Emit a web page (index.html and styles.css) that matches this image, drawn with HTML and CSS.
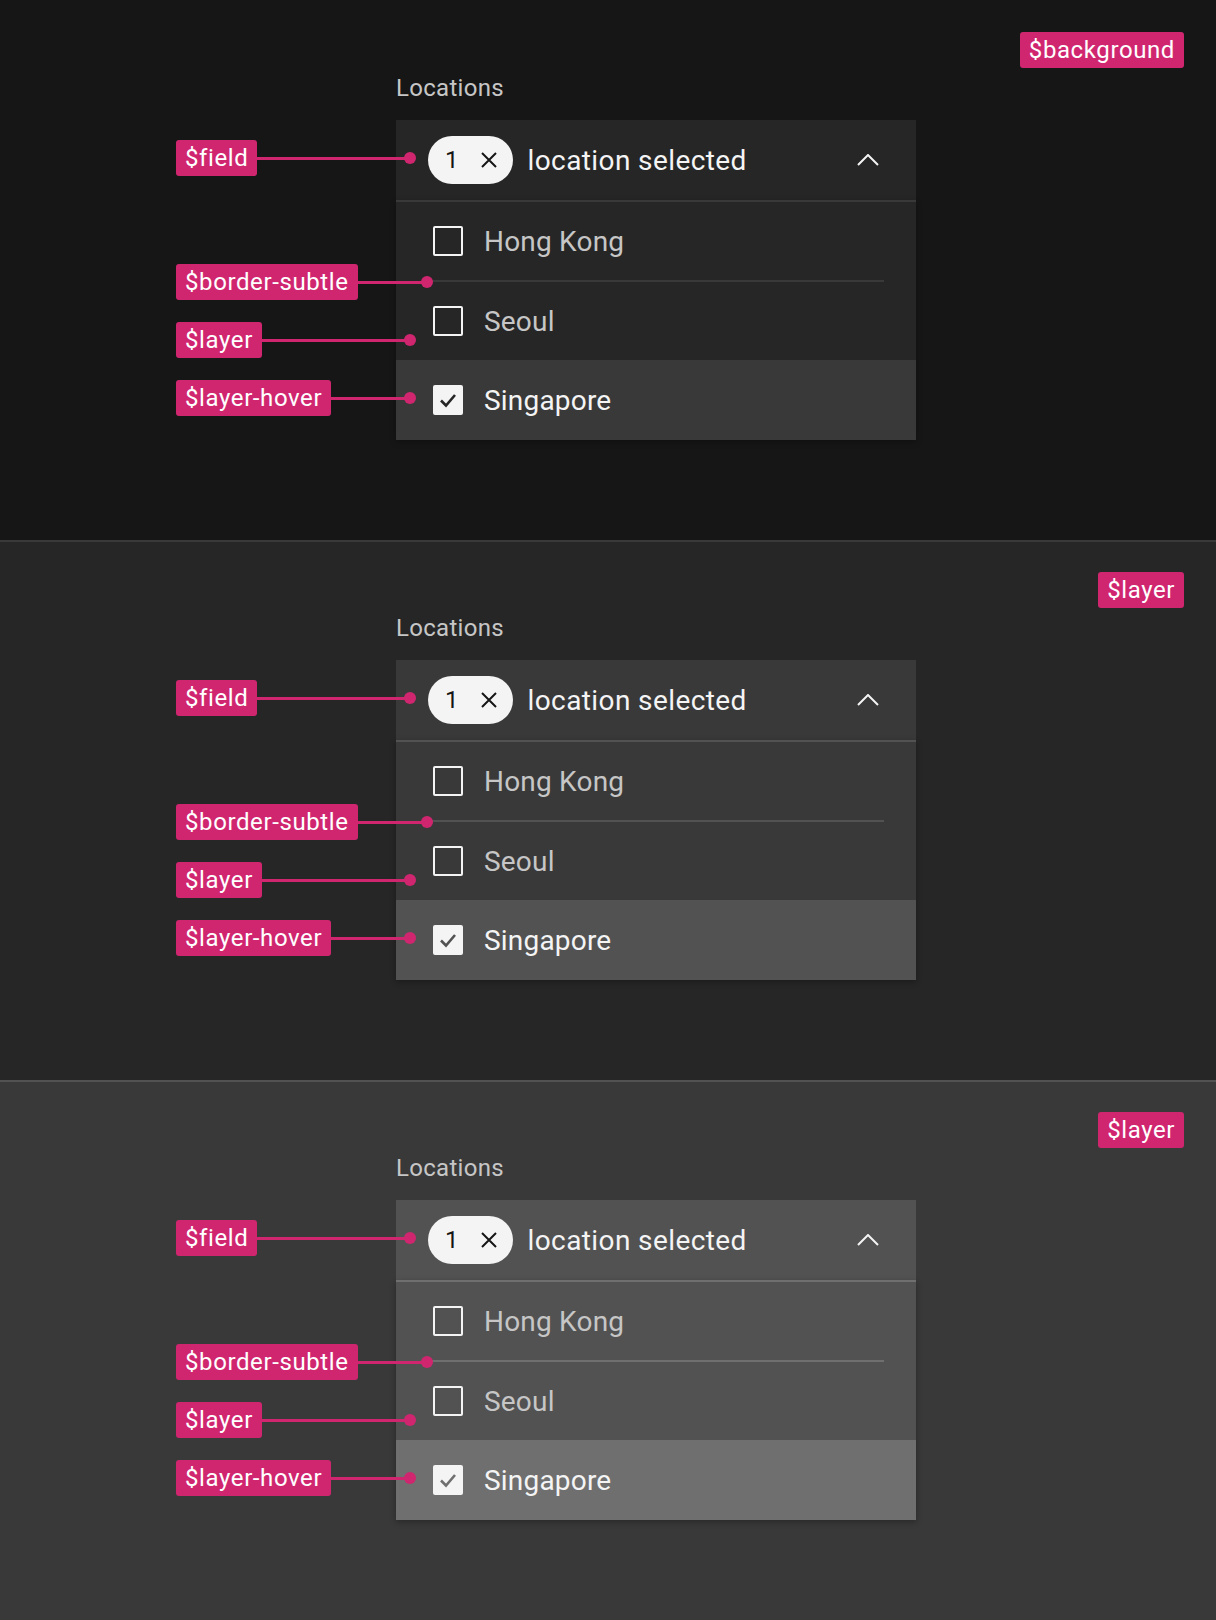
FILE: index.html
```html
<!DOCTYPE html>
<html lang="en">
<head>
<meta charset="utf-8">
<title>Multiselect layering</title>
<link rel="stylesheet" href="styles.css">
</head>
<body>

<section class="panel p1">
  <span class="token">$background</span>
  <div class="note n-field"><span class="tag">$field</span><span class="line"></span><span class="dot"></span></div>
  <div class="note n-border"><span class="tag">$border-subtle</span><span class="line"></span><span class="dot"></span></div>
  <div class="note n-layer"><span class="tag">$layer</span><span class="line"></span><span class="dot"></span></div>
  <div class="note n-hover"><span class="tag">$layer-hover</span><span class="line"></span><span class="dot"></span></div>
  <div class="control">
    <div class="label">Locations</div>
    <div class="field">
      <span class="pill"><span class="count">1</span><svg class="x" viewBox="0 0 16 16"><path d="M1 1L15 15M15 1L1 15"/></svg></span>
      <span class="value">location selected</span>
      <svg class="chev" viewBox="0 0 22 12"><path d="M1 11L11 1L21 11"/></svg>
    </div>
    <div class="menu">
      <div class="item"><span class="box"></span><span class="txt">Hong Kong</span></div>
      <div class="item sep"><span class="box"></span><span class="txt">Seoul</span></div>
      <div class="item hover"><span class="box on"><svg viewBox="0 0 30 30"><path d="M8 15.5L13 20.5L22 10"/></svg></span><span class="txt">Singapore</span></div>
    </div>
  </div>
</section>

<section class="panel p2">
  <span class="token">$layer</span>
  <div class="note n-field"><span class="tag">$field</span><span class="line"></span><span class="dot"></span></div>
  <div class="note n-border"><span class="tag">$border-subtle</span><span class="line"></span><span class="dot"></span></div>
  <div class="note n-layer"><span class="tag">$layer</span><span class="line"></span><span class="dot"></span></div>
  <div class="note n-hover"><span class="tag">$layer-hover</span><span class="line"></span><span class="dot"></span></div>
  <div class="control">
    <div class="label">Locations</div>
    <div class="field">
      <span class="pill"><span class="count">1</span><svg class="x" viewBox="0 0 16 16"><path d="M1 1L15 15M15 1L1 15"/></svg></span>
      <span class="value">location selected</span>
      <svg class="chev" viewBox="0 0 22 12"><path d="M1 11L11 1L21 11"/></svg>
    </div>
    <div class="menu">
      <div class="item"><span class="box"></span><span class="txt">Hong Kong</span></div>
      <div class="item sep"><span class="box"></span><span class="txt">Seoul</span></div>
      <div class="item hover"><span class="box on"><svg viewBox="0 0 30 30"><path d="M8 15.5L13 20.5L22 10"/></svg></span><span class="txt">Singapore</span></div>
    </div>
  </div>
</section>

<section class="panel p3">
  <span class="token">$layer</span>
  <div class="note n-field"><span class="tag">$field</span><span class="line"></span><span class="dot"></span></div>
  <div class="note n-border"><span class="tag">$border-subtle</span><span class="line"></span><span class="dot"></span></div>
  <div class="note n-layer"><span class="tag">$layer</span><span class="line"></span><span class="dot"></span></div>
  <div class="note n-hover"><span class="tag">$layer-hover</span><span class="line"></span><span class="dot"></span></div>
  <div class="control">
    <div class="label">Locations</div>
    <div class="field">
      <span class="pill"><span class="count">1</span><svg class="x" viewBox="0 0 16 16"><path d="M1 1L15 15M15 1L1 15"/></svg></span>
      <span class="value">location selected</span>
      <svg class="chev" viewBox="0 0 22 12"><path d="M1 11L11 1L21 11"/></svg>
    </div>
    <div class="menu">
      <div class="item"><span class="box"></span><span class="txt">Hong Kong</span></div>
      <div class="item sep"><span class="box"></span><span class="txt">Seoul</span></div>
      <div class="item hover"><span class="box on"><svg viewBox="0 0 30 30"><path d="M8 15.5L13 20.5L22 10"/></svg></span><span class="txt">Singapore</span></div>
    </div>
  </div>
</section>

</body>
</html>
```

FILE: styles.css
```css
* { box-sizing: border-box; }

html, body {
  margin: 0;
  padding: 0;
  background: #393939;
  font-family: Roboto, "Liberation Sans", sans-serif;
}

.panel {
  position: relative;
  height: 540px;
  border-top: 2px solid var(--sep);
  background: var(--bg);
  padding: 70px 0 0 396px;
}

.p1 { --bg: #161616; --field: #262626; --layer: #262626; --hover: #393939; --border: #393939; --sep: #161616; }
.p2 { --bg: #262626; --field: #393939; --layer: #393939; --hover: #525252; --border: #525252; --sep: #393939; }
.p3 { --bg: #393939; --field: #525252; --layer: #525252; --hover: #6f6f6f; --border: #6f6f6f; --sep: #525252; }

.control {
  width: 520px;
  display: flex;
  flex-direction: column;
}

.label {
  font-size: 24px;
  line-height: 32px;
  color: #c6c6c6;
  letter-spacing: 0.3px;
  margin-bottom: 16px;
}

.field {
  height: 80px;
  background: var(--field);
  display: flex;
  align-items: center;
  padding-left: 32px;
  padding-right: 32px;
}

.pill {
  height: 48px;
  border-radius: 24px;
  background: #f4f4f4;
  display: flex;
  align-items: center;
  padding: 0 16px 0 17px;
  gap: 22px;
}

.count {
  font-size: 24px;
  color: #161616;
  line-height: 1;
}

.x {
  width: 16px;
  height: 16px;
  fill: none;
  stroke: #161616;
  stroke-width: 2;
}

.value {
  margin-left: 15px;
  font-size: 28px;
  color: #f4f4f4;
  flex: 1;
  letter-spacing: 0.4px;
}

.chev {
  width: 22px;
  height: 12px;
  fill: none;
  stroke: #f4f4f4;
  stroke-width: 2;
  margin-right: 5px;
}

.menu {
  background: var(--layer);
  border-top: 2px solid var(--border);
  box-shadow: 0 2px 6px rgba(0, 0, 0, 0.3);
}

.item {
  height: 78px;
  display: flex;
  align-items: center;
  padding-left: 37px;
  gap: 21px;
  position: relative;
}

.item.sep {
  height: 80px;
  border-top: 2px solid var(--border);
  margin: 0 32px;
  padding-left: 5px;
}

.item.hover {
  height: 80px;
  background: var(--hover);
}

.box {
  width: 30px;
  height: 30px;
  border: 2px solid #f4f4f4;
  border-radius: 2px;
  flex: none;
}

.box.on {
  background: #f4f4f4;
  display: flex;
  align-items: center;
  justify-content: center;
  border: none;
}

.box.on svg {
  width: 30px;
  height: 30px;
  fill: none;
  stroke: var(--hover);
  stroke-width: 2.6;
}

.p1 .box.on svg { stroke: #262626; }

.txt {
  font-size: 28px;
  color: #c6c6c6;
  letter-spacing: 0.2px;
}

.hover .txt { color: #f4f4f4; }

/* annotations */
.token, .tag {
  background: #d02670;
  color: #ffffff;
  font-size: 24px;
  height: 36px;
  line-height: 36px;
  padding: 0 9px;
  border-radius: 3px;
  white-space: nowrap;
  letter-spacing: 0.6px;
}

.token {
  position: absolute;
  top: 30px;
  right: 32px;
}

.note {
  position: absolute;
  left: 176px;
  display: flex;
  align-items: center;
  z-index: 2;
}

.note .line {
  flex: 1;
  height: 3px;
  background: #d02670;
}

.note .dot {
  width: 12px;
  height: 12px;
  border-radius: 50%;
  background: #d02670;
  margin-left: -2px;
}

.n-field { top: 138px; width: 240px; }
.n-border { top: 262px; width: 257px; }
.n-layer { top: 320px; width: 240px; }
.n-hover { top: 378px; width: 240px; }
```
